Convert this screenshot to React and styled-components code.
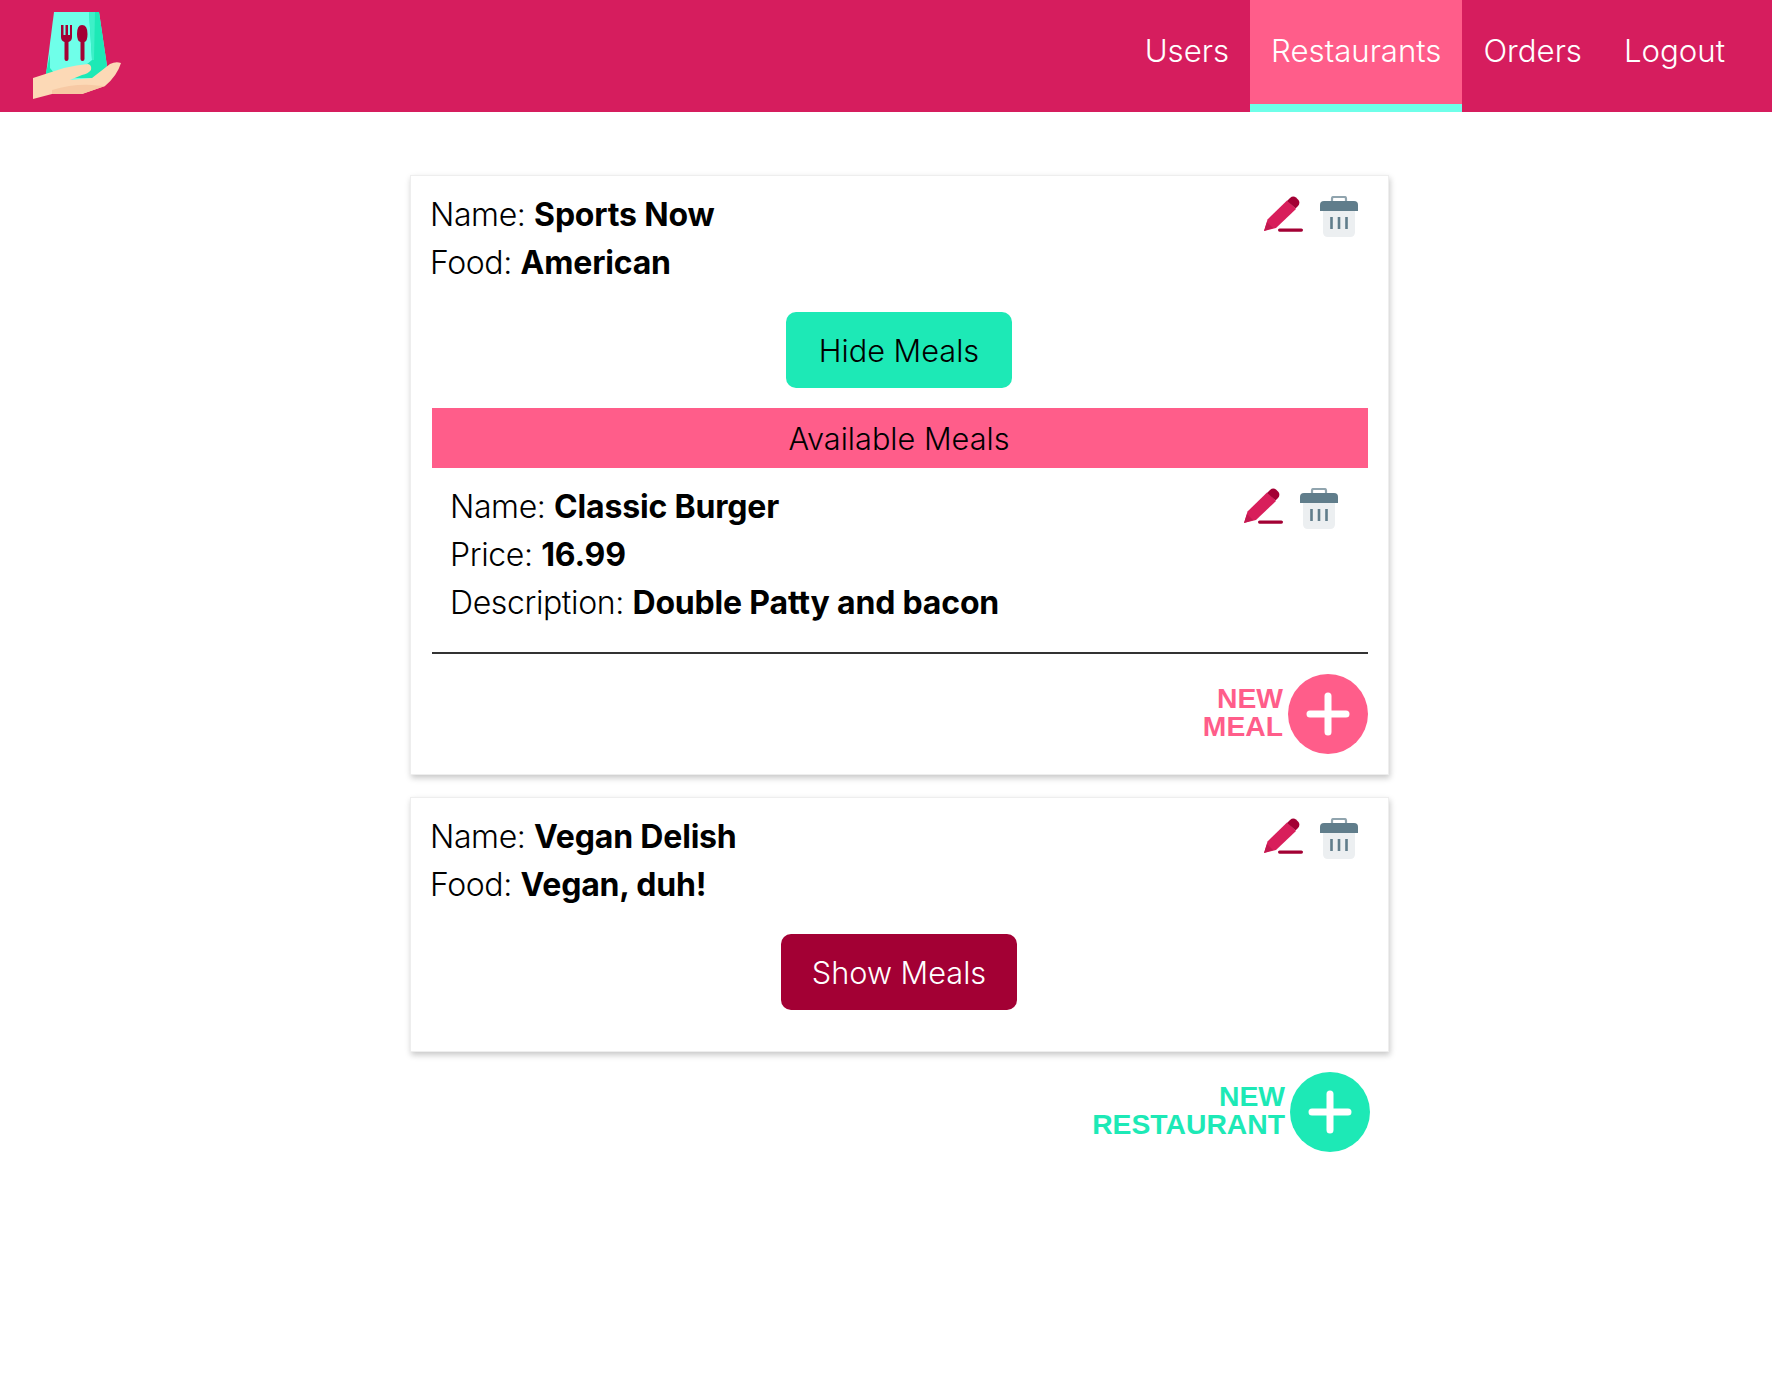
import React from "react";
import styled, { createGlobalStyle } from "styled-components";

const Global = createGlobalStyle`
  html, body { margin: 0; padding: 0; background: #fff; }
  body { font-family: Inter, "Liberation Sans", sans-serif; color: #000; }
  * { box-sizing: border-box; }
`;
const Page = styled.div`min-height: 1386px; background: #fff;`;
const Header = styled.header`
  height: 112px; background: #d61d5e; display: flex; align-items: stretch;
  justify-content: space-between; padding: 0 26px 0 32px;
`;
const LogoWrap = styled.div`display: flex; align-items: flex-start;`;
const Nav = styled.nav`display: flex; align-items: stretch;`;
const NavItem = styled.a`
  display: flex; align-items: center; padding: 0 21px 2px; color: #fff; font-size: 31.2px; font-weight: 300;
  background: ${p => p.$active ? "#ff5d8a" : "transparent"};
  border-bottom: 8px solid ${p => p.$active ? "#6fffe9" : "transparent"};
`;
const Main = styled.main`width: 979px; margin: 63px 0 0 410px; display: flex; flex-direction: column; gap: 22px;`;
const Card = styled.section`
  background: #fff; padding: 15px 20px 20px 21px; border: 1px solid #eee;
  box-shadow: 1px 3px 6px rgba(0,0,0,.22);
`;
const TopRow = styled.div`display: flex; justify-content: space-between; align-items: flex-start; padding: ${p => p.$inset ? "0 20px" : "0"};`;
const Info = styled.div`font-size: 32px; line-height: 48px; font-weight: 300; letter-spacing: -.38px; margin-left: -2px;`;
const Strong = styled.b`font-weight: 700; letter-spacing: -.18px;`;
const Icons = styled.div`display: flex; gap: 17px; padding: 5px 10px 0 0; align-items: flex-start;`;
const Center = styled.div`display: flex; justify-content: center; margin: 25px 0 0 -2px;`;
const Toggle = styled.button`
  height: 76px; padding: 0 ${p => p.$open ? 33 : 31}px; border: 0; border-radius: 10px; font: 300 30.7px Inter, sans-serif;
  background: ${p => p.$open ? "#1de9b6" : "#a30034"}; color: ${p => p.$open ? "#000" : "#fff"};
`;
const Band = styled.div`
  height: 60px; margin-top: 20px; padding-right: 2px; background: #ff5d8a; display: flex; align-items: center; justify-content: center;
  font-size: 30.7px; font-weight: 300;
`;
const Meal = styled.div`padding-top: 15px;`;
const Divider = styled.hr`margin: 25px 0 0; border: 0; border-top: 2px solid #333;`;
const AddRow = styled.div`display: flex; justify-content: flex-end; align-items: center; gap: 5px; margin-top: ${p => p.$mt}px; margin-right: ${p => p.$mr || 0}px;`;
const AddLabel = styled.div`
  text-align: right; font: 700 28.3px/28px "Liberation Sans", Arial, sans-serif; color: ${p => p.$c}; margin-top: -4px;
`;
const Circle = styled.div`width: 80px; height: 80px; border-radius: 50%; background: ${p => p.$c}; display: flex; align-items: center; justify-content: center;`;
const Spacer = styled.div`height: 21px;`;

const Pencil = () => (
  <svg width="40" height="38" viewBox="0 0 40 38">
    <path d="M1 35 L4.5 23.5 L24 4.5 L33 13 L13 32 Z" fill="#d81e5b"/>
    <path d="M24 5 L27 2 Q30 -.5 33 1.5 L35.5 4 Q37.5 7 35 10 L32.5 12.5 Z" fill="#a30034"/>
    <path d="M1 35 L4 26 L10 32 Z" fill="#c2184f"/>
    <rect x="15" y="32.5" width="25" height="3.2" rx="1.6" fill="#a30034"/>
  </svg>
);
const Trash = () => (
  <svg width="38" height="41" viewBox="0 0 38 41">
    <path d="M3 12 H35 V36 Q35 41 30 41 H8 Q3 41 3 36 Z" fill="#eceff1"/>
    <path d="M12 6 V2.5 Q12 1 13.5 1 H24.5 Q26 1 26 2.5 V6" fill="none" stroke="#90a4ae" strokeWidth="2.2"/>
    <path d="M4 5 H34 Q38 5 38 9 V15 H0 V9 Q0 5 4 5 Z" fill="#607d8b"/>
    <path d="M11.5 21 V33 M19 21 V33 M26.5 21 V33" stroke="#607d8b" strokeWidth="2.6"/>
  </svg>
);
const Plus = () => (
  <svg width="44" height="44" viewBox="0 0 44 44">
    <path d="M22 4 V40 M4 22 H40" stroke="#fff" strokeWidth="7" strokeLinecap="round"/>
  </svg>
);
const Logo = () => (
  <svg width="90" height="90" viewBox="0 0 90 90" style={{ marginTop: 10 }}>
    <path d="M22 2 H67 L75 56 L62 72 H13 Z" fill="#6fffe9"/>
    <path d="M57 2 H67 L75 56 L66 68 H38 L60 50 Z" fill="#1de9b6"/>
    <path d="M57 2 H63 L62 50 L60 50 Z" fill="#3df0c8"/>
    <path d="M18 44 L13 68 L26 68 L18 58 Z" fill="#1de9b6"/>
    <path d="M29 15 V27 Q29 31 32.5 32 V49 Q32.5 51 34.5 51 Q36.5 51 36.5 49 V32 Q40 31 40 27 V15 H38 V25 H36 V15 H33.5 V25 H31.5 V15 Z" fill="#a30034"/>
    <path d="M50 15 Q45 15 45 24 Q45 31 48.5 32 V49 Q48.5 51 50.5 51 Q52.5 51 52.5 49 V32 Q55.5 31 55.5 24 Q55.5 15 50 15 Z" fill="#a30034"/>
    <path d="M1 68 L32 58 Q45 55 56 54 Q60 55 59 60 Q56 64 50 65 L38 70 L60 68 L78 54 Q84 51 89 53 Q85 66 73 76 L50 84 L20 84 L1 89 Z" fill="#fcd9b6"/>
    <path d="M20 80 Q40 74 60 75 Q68 76 73 76 L50 84 L20 84 Z" fill="#f7c9a4"/>
  </svg>
);

const Label = ({ k, v }) => <div>{k}: <Strong>{v}</Strong></div>;
const Add = ({ c, a, b, mt, mr }) => (
  <AddRow $mt={mt} $mr={mr}>
    <AddLabel $c={c}>{a}<br/>{b}</AddLabel>
    <Circle $c={c}><Plus/></Circle>
  </AddRow>
);

export default function App() {
  return (
    <Page>
      <Global/>
      <Header>
        <LogoWrap><Logo/></LogoWrap>
        <Nav>
          <NavItem>Users</NavItem>
          <NavItem $active>Restaurants</NavItem>
          <NavItem>Orders</NavItem>
          <NavItem>Logout</NavItem>
        </Nav>
      </Header>
      <Main>
        <Card>
          <TopRow>
            <Info><Label k="Name" v="Sports Now"/><Label k="Food" v="American"/></Info>
            <Icons><Pencil/><Trash/></Icons>
          </TopRow>
          <Center><Toggle $open>Hide Meals</Toggle></Center>
          <Band>Available Meals</Band>
          <Meal>
            <TopRow $inset>
              <Info><Label k="Name" v="Classic Burger"/><Label k="Price" v="16.99"/><Label k="Description" v="Double Patty and bacon"/></Info>
              <Icons><Pencil/><Trash/></Icons>
            </TopRow>
          </Meal>
          <Divider/>
          <Add c="#ff5d8a" a="NEW" b="MEAL" mt={20}/>
        </Card>
        <Card>
          <TopRow>
            <Info><Label k="Name" v="Vegan Delish"/><Label k="Food" v="Vegan, duh!"/></Info>
            <Icons><Pencil/><Trash/></Icons>
          </TopRow>
          <Center><Toggle>Show Meals</Toggle></Center>
          <Spacer/>
        </Card>
        <Add c="#1de9b6" a="NEW" b="RESTAURANT" mt={-2} mr={19}/>
      </Main>
    </Page>
  );
}
